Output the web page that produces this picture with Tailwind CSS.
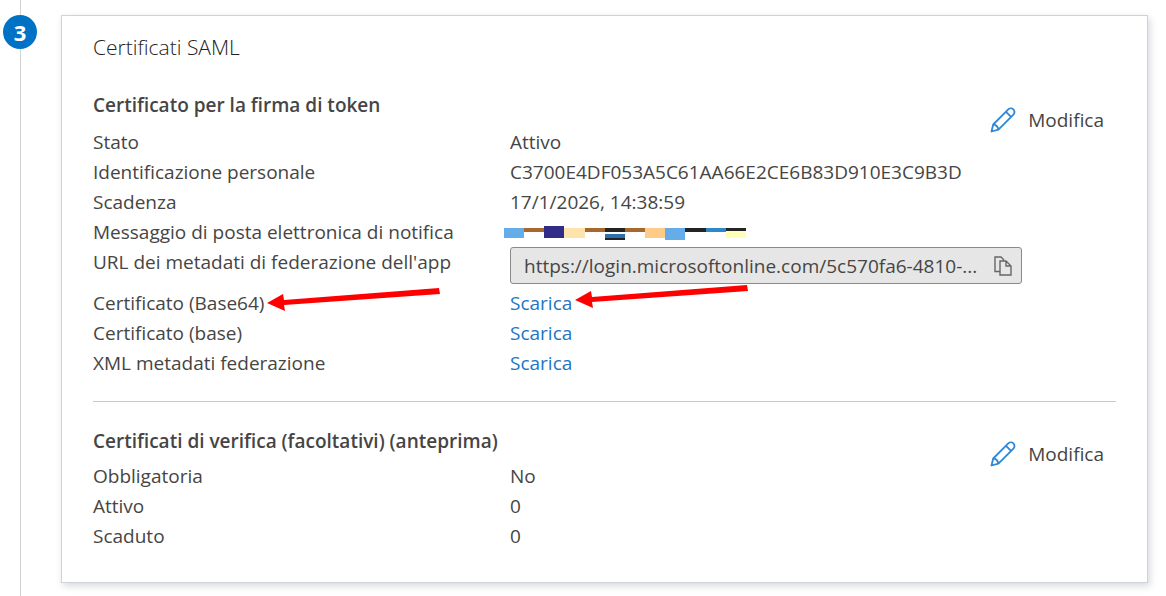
<!DOCTYPE html>
<html lang="it">
<head>
<meta charset="utf-8">
<meta name="viewport" content="width=device-width, initial-scale=1">
<title>Certificati SAML</title>
<script src="https://cdn.jsdelivr.net/npm/@tailwindcss/browser@4"></script>
</head>
<body class="bg-white font-['Open_Sans','Noto_Sans',sans-serif] text-[19px] text-[#464544]">
<svg class="hidden" aria-hidden="true">
  <symbol id="pencil" viewBox="0 0 26 26"><g fill="none" stroke="#2f87d6" stroke-width="1.8" stroke-linejoin="round"><path d="M1.5 24.5 3.2 17.5 18.3 2.4C19.7 1 22 1 23.4 2.4 24.9 3.9 24.9 6.2 23.4 7.6L8.4 22.7Z"/><path d="M3.2 17.5C5.8 17.5 8.2 19.8 8.4 22.7M16 4.8 21.1 9.9"/></g></symbol>
  <symbol id="arrow" viewBox="0 0 174 24"><path fill="#f00" d="M0 15 16 6 17 12 172 0 173 6 17 17 18 23Z"/></symbol>
</svg>
<div class="flex min-h-screen pr-[18px]">
  <aside class="flex w-[61px] shrink-0 flex-col">
    <div class="ml-5 h-[15px] w-px bg-[#d2d2d2]"></div>
    <div class="ml-[3px] flex size-[34px] items-center justify-center rounded-full bg-[#0072c6] text-[22px] font-bold text-white">3</div>
    <div class="ml-5 w-px grow bg-[#d2d2d2]"></div>
  </aside>
  <main class="mt-[15px] mb-3 min-w-0 grow self-start border border-[#cfd3d6] px-[31px] pb-[31px] shadow-[2px_3px_7px_rgba(70,80,110,0.22)]">
    <h1 class="pt-4 text-[21px] leading-[30px] font-light text-[#222]">Certificati SAML</h1>
    <section class="relative pt-7">
      <h2 class="leading-[30px] font-semibold">Certificato per la firma di token</h2>
      <button type="button" class="absolute top-7 right-3 flex h-[60px] items-center gap-3"><svg class="size-[26px]" aria-hidden="true"><use href="#pencil"/></svg>Modifica</button>
      <table class="mt-[7px] w-full table-fixed text-left leading-[30px]">
        <colgroup><col class="w-[417px]"><col></colgroup>
        <tbody>
        <tr><th scope="row" class="p-0 font-normal">Stato</th><td class="p-0">Attivo</td></tr>
        <tr><th scope="row" class="p-0 font-normal">Identificazione personale</th><td class="p-0">C3700E4DF053A5C61AA66E2CE6B83D910E3C9B3D</td></tr>
        <tr><th scope="row" class="p-0 font-normal">Scadenza</th><td class="p-0">17/1/2026, 14:38:59</td></tr>
        <tr><th scope="row" class="p-0 font-normal">Messaggio di posta elettronica di notifica</th><td class="p-0 pt-0.5">
          <svg class="-ml-1.5 block h-[14px] w-[243px]" viewBox="0 0 243 14" shape-rendering="crispEdges" role="img" aria-label="Indirizzo oscurato">
            <path fill="#65ade9" d="M0 2h20v10H0zM161 2h20v12h-20z"/><path fill="#a8672d" d="M20 2h20v4H20zM81 2h20v4H81zM121 2h20v4h-20z"/>
            <path fill="#302c88" d="M40 0h20v12H40z"/><path fill="#ffe3ad" d="M60 2h21v10H60z"/>
            <path fill="#242424" d="M101 2h20v4h-20zM101 8h20v6h-20zM181 2h21v4h-21zM222 2h20v3h-20z"/><path fill="#2b70b3" d="M101 8h20v4h-20z"/>
            <path fill="#ffcb88" d="M141 2h20v10h-20z"/><path fill="#2e87c7" d="M202 2h20v4h-20z"/><path fill="#ffffb8" d="M222 5h20v7h-20z"/>
          </svg></td></tr>
        <tr class="h-[41px] align-top"><th scope="row" class="p-0 font-normal"><label for="url">URL dei metadati di federazione dell'app</label></th><td class="p-0">
          <div class="flex h-[37px] max-w-[512px] items-center rounded-[3px] border border-[#8a8a8a] bg-[#e6e6e6] pr-[9px] pl-[13px]">
            <input id="url" readonly value="https://login.microsoftonline.com/5c570fa6-4810-..." class="min-w-0 grow bg-transparent outline-none">
            <button type="button" aria-label="Copia" class="shrink-0"><svg class="block h-5 w-[18px]" viewBox="0 0 18 20" fill="none" stroke="#666" stroke-width="1.4" aria-hidden="true"><path d="M5.5 15.5H1V1h6l3 3M6 5h6l5 5v9H6ZM12 5v5h5"/></svg></button>
          </div></td></tr>
        <tr><th scope="row" class="relative p-0 font-normal">Certificato (Base64)<svg class="absolute top-0 left-[174px] h-6 w-[174px]" aria-hidden="true"><use href="#arrow"/></svg></th><td class="relative p-0"><a href="#base64" class="text-[#2076c4]">Scarica</a><svg class="absolute -top-[3px] left-[65px] h-6 w-[174px]" aria-hidden="true"><use href="#arrow"/></svg></td></tr>
        <tr><th scope="row" class="p-0 font-normal">Certificato (base)</th><td class="p-0"><a href="#base" class="text-[#2076c4]">Scarica</a></td></tr>
        <tr><th scope="row" class="p-0 font-normal">XML metadati federazione</th><td class="p-0"><a href="#xml" class="text-[#2076c4]">Scarica</a></td></tr>
        </tbody>
      </table>
    </section>
    <hr class="mt-[23px] border-[#c8c8c8]">
    <section class="relative pt-6">
      <h2 class="leading-[30px] font-semibold">Certificati di verifica (facoltativi) (anteprima)</h2>
      <button type="button" class="absolute top-[22px] right-3 flex h-[60px] items-center gap-3"><svg class="size-[26px]" aria-hidden="true"><use href="#pencil"/></svg>Modifica</button>
      <table class="mt-[5px] w-full table-fixed text-left leading-[30px]">
        <colgroup><col class="w-[417px]"><col></colgroup>
        <tbody>
        <tr><th scope="row" class="p-0 font-normal">Obbligatoria</th><td class="p-0">No</td></tr>
        <tr><th scope="row" class="p-0 font-normal">Attivo</th><td class="p-0">0</td></tr>
        <tr><th scope="row" class="p-0 font-normal">Scaduto</th><td class="p-0">0</td></tr>
        </tbody>
      </table>
    </section>
  </main>
</div>
</body>
</html>
